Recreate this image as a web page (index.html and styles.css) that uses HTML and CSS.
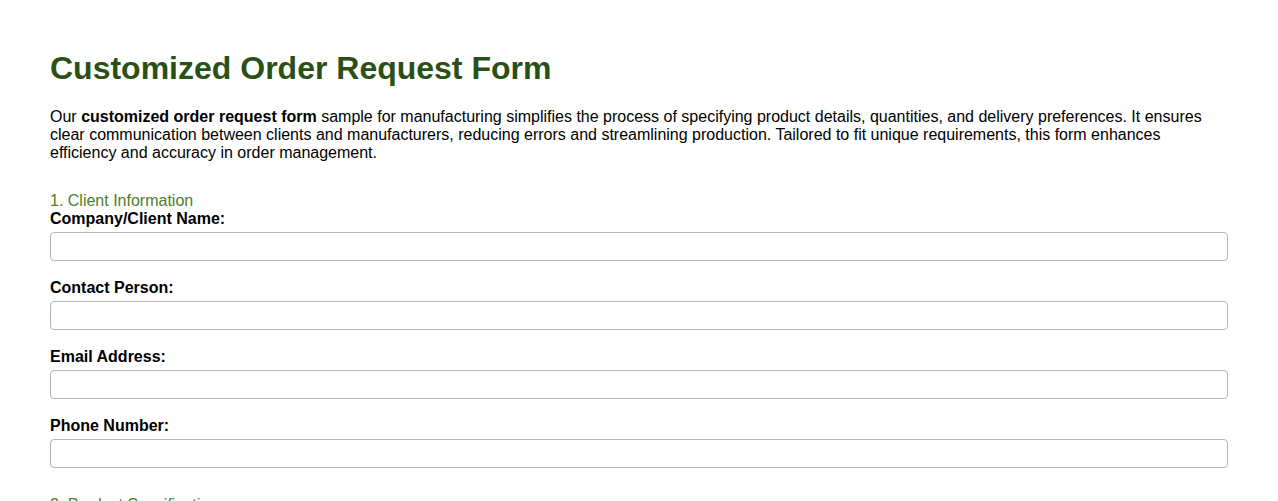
FILE: index.html
```html
<!DOCTYPE html>
<html lang="en">
<head>
<meta charset="utf-8">
<title>Customized Order Request Form</title>
<link rel="stylesheet" href="styles.css">
</head>
<body>
<main class="page">
  <h1 class="title">Customized Order Request Form</h1>
  <p class="intro">Our <strong>customized order request form</strong> sample for manufacturing simplifies the process of specifying product details, quantities, and delivery preferences. It ensures clear communication between clients and manufacturers, reducing errors and streamlining production. Tailored to fit unique requirements, this form enhances efficiency and accuracy in order management.</p>
  <form class="form">
    <section class="section">
      <h3 class="section-title">1. Client Information</h3>
      <div class="field">
        <label class="label" for="company">Company/Client Name:</label>
        <input class="input" id="company" type="text">
      </div>
      <div class="field">
        <label class="label" for="contact">Contact Person:</label>
        <input class="input" id="contact" type="text">
      </div>
      <div class="field">
        <label class="label" for="email">Email Address:</label>
        <input class="input" id="email" type="email">
      </div>
      <div class="field">
        <label class="label" for="phone">Phone Number:</label>
        <input class="input" id="phone" type="tel">
      </div>
    </section>
    <section class="section">
      <h3 class="section-title">2. Product Specifications</h3>
      <div class="field">
        <label class="label" for="product">Product Name:</label>
        <input class="input" id="product" type="text">
      </div>
    </section>
  </form>
</main>
</body>
</html>
```
FILE: styles.css
```css
html, body {
  margin: 0;
  padding: 0;
  background: #ffffff;
}
body {
  font-family: "Liberation Sans", Arial, sans-serif;
  font-size: 16px;
  color: #000;
}
.page {
  padding: 50px 50px 40px;
}
.title {
  margin: 0;
  font-size: 32px;
  line-height: 37px;
  font-weight: bold;
  color: #2a5018;
}
.intro {
  margin: 21px 0 0;
  line-height: 18px;
}
.form {
  display: block;
}
.section {
  margin-top: 30px;
}
.section + .section {
  margin-top: 28px;
}
.section-title {
  margin: 0;
  font-size: 16px;
  line-height: 18px;
  font-weight: normal;
  color: #4b8030;
}
.field {
  display: flex;
  flex-direction: column;
  gap: 4px;
  margin-bottom: 18px;
}
.label {
  font-weight: bold;
  line-height: 18px;
}
.input {
  box-sizing: border-box;
  width: 100%;
  height: 29px;
  margin: 0;
  padding: 4px 8px;
  border: 1px solid #b5b5b5;
  border-radius: 4px;
  font-family: inherit;
  font-size: 14px;
  background: #fff;
}
```
